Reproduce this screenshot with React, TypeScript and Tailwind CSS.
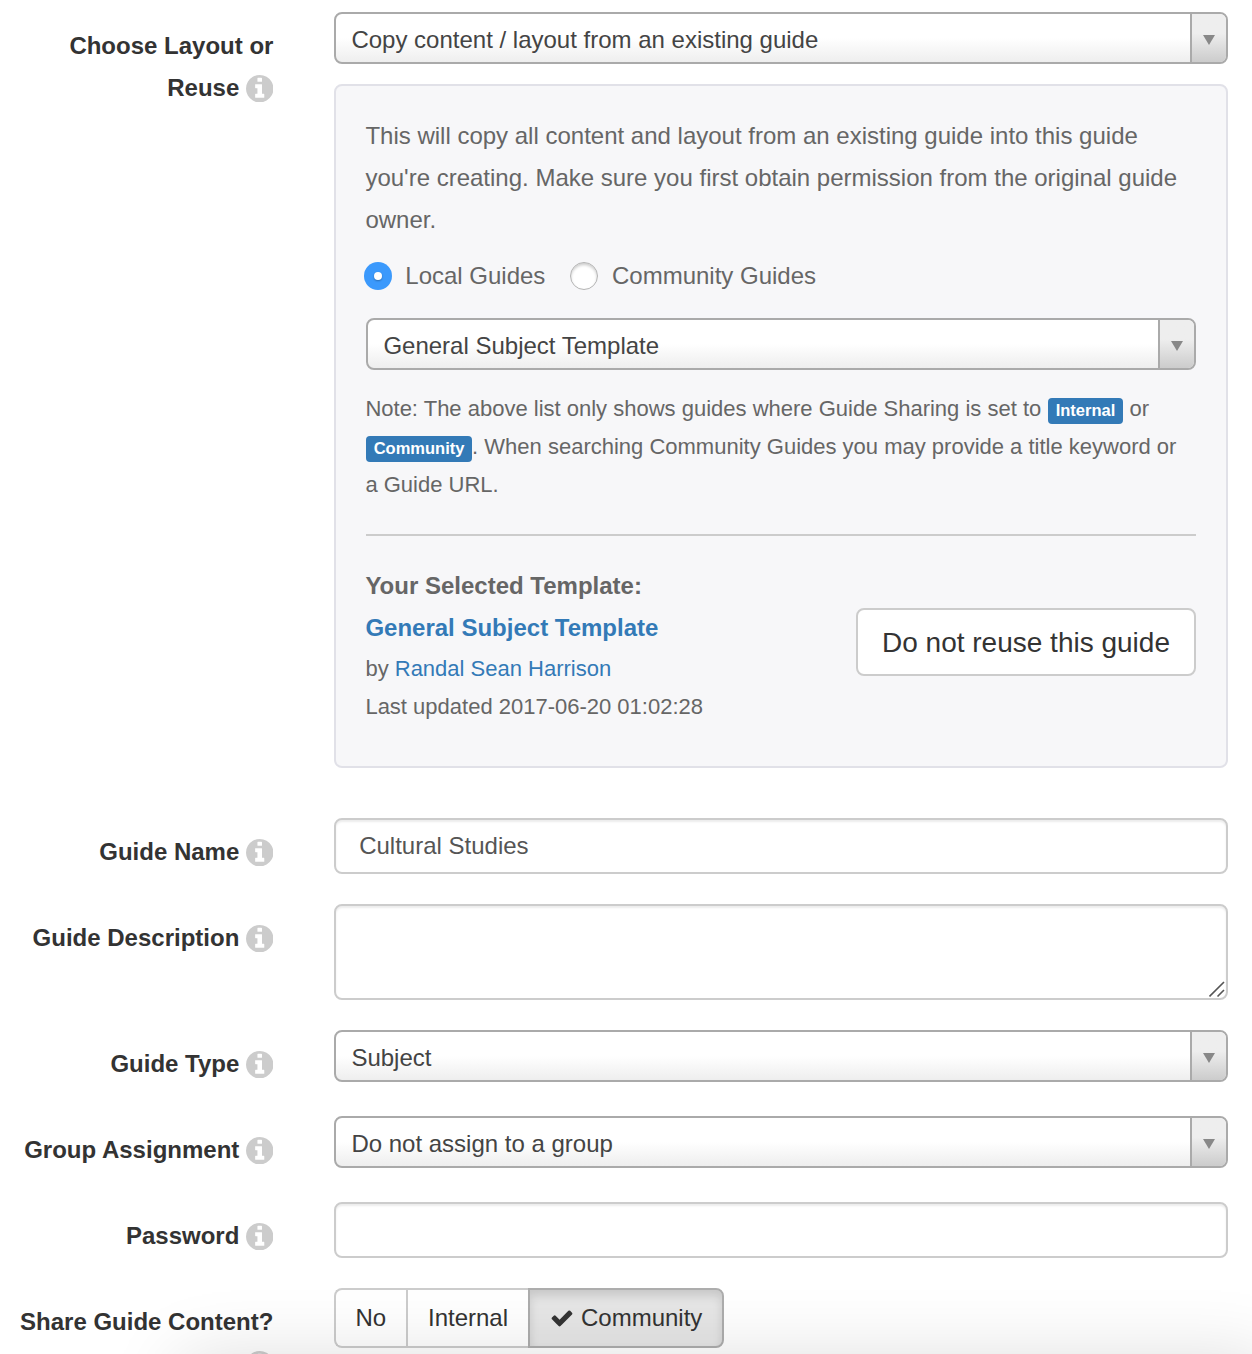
import type { ReactNode } from "react";

function InfoIcon() {
  return (
    <svg viewBox="0 128 1536 1536" className="inline-block h-[27.43px] w-[27.43px] align-[-6.4px]" fill="#cccccc" aria-hidden="true">
      <path d="M1024 1376v-160q0-14-9-23t-23-9h-96v-512q0-14-9-23t-23-9h-320q-14 0-23 9t-9 23v160q0 14 9 23t23 9h96v320h-96q-14 0-23 9t-9 23v160q0 14 9 23t23 9h448q14 0 23-9t9-23zm-128-896v-160q0-14-9-23t-23-9h-192q-14 0-23 9t-9 23v160q0 14 9 23t23 9h192q14 0 23-9t9-23zm640 416q0 209-103 385.5t-279.5 279.5-385.5 103-385.5-103-279.5-279.5-103-385.5 103-385.5 279.5-279.5 385.5-103 385.5 103 279.5 279.5 103 385.5z" />
    </svg>
  );
}

function CheckIcon() {
  return (
    <svg viewBox="0 0 1792 1792" className="h-6 w-6" fill="#333333" aria-hidden="true">
      <path d="M1671 566q0 40-28 68l-724 724-136 136q-28 28-68 28t-68-28l-136-136-362-362q-28-28-28-68t28-68l136-136q28-28 68-28t68 28l294 295 656-657q28-28 68-28t68 28l136 136q28 28 28 68z" />
    </svg>
  );
}

function Row({ label, children }: { label: ReactNode; children: ReactNode }) {
  return (
    <div className="flex items-start">
      <div className="mr-[60.6px] h-0 w-[273.4px] shrink-0 pt-[13px] text-right font-bold whitespace-nowrap text-[#333333]">
        {label}
      </div>
      <div className="w-[894px] shrink-0">{children}</div>
    </div>
  );
}

function Select({ value }: { value: string }) {
  return (
    <div className="flex h-[52px] overflow-hidden rounded-lg border-2 border-[#aaaaaa] bg-linear-to-b from-white from-50% to-[#eeeeee]">
      <div className="flex-1 pt-[5px] pl-[15.4px] text-[#444444]">{value}</div>
      <div className="flex w-9 items-center justify-center border-l-2 border-[#aaaaaa] bg-linear-to-b from-[#eeeeee] from-40% to-[#cccccc]">
        <svg width="12" height="10" viewBox="0 0 12 10" className="mt-1" fill="#888888" aria-hidden="true">
          <path d="M0 0h12L6 10z" />
        </svg>
      </div>
    </div>
  );
}

function Badge({ children }: { children: ReactNode }) {
  return (
    <span className="rounded-[4px] bg-[#337ab7] px-[7.7px] pt-[3px] pb-[5px] text-[16.5px] leading-none font-bold text-white">
      {children}
    </span>
  );
}

function TextBox({ value }: { value?: string }) {
  return (
    <div className="h-14 rounded-lg border-2 border-[#cccccc] bg-white pt-[5px] pl-[23.2px] text-[#555555] shadow-[inset_0_2px_2px_rgba(0,0,0,0.075)]">
      {value}
    </div>
  );
}

export default function App() {
  return (
    <div className="relative h-[1354px] w-[1252px] overflow-hidden bg-white pt-3 font-['Liberation_Sans',Arial,sans-serif] text-[24px] leading-[42px]">
      <Row
        label={
          <>
            Choose Layout or
            <br />
            Reuse <InfoIcon />
          </>
        }
      >
        <Select value="Copy content / layout from an existing guide" />
        <div className="mt-5 h-[684px] rounded-lg border-2 border-[#e1e1e8] bg-[#f7f7f9] px-[30px] pt-[29px] whitespace-nowrap text-[#666666]">
          <p className="-ml-[0.6px]">
            This will copy all content and layout from an existing guide into this guide
            <br />
            you're creating. Make sure you first obtain permission from the original guide
            <br />
            owner.
          </p>
          <div className="mt-[14px] -ml-0.5 flex items-center">
            <span className="flex size-7 items-center justify-center rounded-full bg-[#3b99fc]">
              <span className="size-2 rounded-full bg-white shadow-[0_1px_2px_rgba(0,0,0,0.3)]" />
            </span>
            <span className="w-[178px] pl-[13.3px]">Local Guides</span>
            <span className="size-7 rounded-full border border-[#b4b4b4] bg-white shadow-[inset_0_2px_3px_rgba(0,0,0,0.2)]" />
            <span className="ml-[14px]">Community Guides</span>
          </div>
          <div className="mt-[21px]">
            <Select value="General Subject Template" />
          </div>
          <p className="mt-5 -ml-[0.6px] text-[22px] leading-[38px]">
            Note: The above list only shows guides where Guide Sharing is set to{" "}
            <span className="ml-[0.6px] pr-[0.4px]">
              <Badge>Internal</Badge>
            </span>{" "}
            or
            <br />
            <span className="ml-[0.6px]">
              <Badge>Community</Badge>
            </span>
            . When searching Community Guides you may provide a title keyword or
            <br />a Guide URL.
          </p>
          <div className="mt-[30px] h-0.5 bg-[#cccccc]" />
          <div className="mt-[29px] -ml-[0.6px] flex justify-between">
            <div>
              <div className="font-bold">Your Selected Template:</div>
              <div className="font-bold text-[#337ab7]">General Subject Template</div>
              <div className="pt-px text-[22px] leading-[38px]">
                by <span className="text-[#337ab7]">Randal Sean Harrison</span>
                <br />
                Last updated 2017-06-20 01:02:28
              </div>
            </div>
            <button className="mt-[43px] h-[68px] w-[340px] rounded-lg border-2 border-[#cccccc] bg-white pt-0.5 text-[28px] text-[#333333]">
              Do not reuse this guide
            </button>
          </div>
        </div>
      </Row>

      <div className="mt-[50px] flex flex-col">
        <Row label={<>Guide Name <InfoIcon /></>}>
          <TextBox value="Cultural Studies" />
        </Row>
        <div className="mt-[30px]">
          <Row label={<>Guide Description <InfoIcon /></>}>
            <div className="flex h-24 items-end justify-end rounded-lg border-2 border-[#cccccc] bg-white shadow-[inset_0_2px_2px_rgba(0,0,0,0.075)]">
              <svg width="17" height="17" viewBox="0 0 17 17" stroke="#555555" strokeWidth="1.6" aria-hidden="true">
                <path d="M0.5 15.5L15 1M8.5 15.5L15 9" />
              </svg>
            </div>
          </Row>
        </div>
        <div className="mt-[30px]">
          <Row label={<>Guide Type <InfoIcon /></>}>
            <Select value="Subject" />
          </Row>
        </div>
        <div className="mt-[34px]">
          <Row label={<>Group Assignment <InfoIcon /></>}>
            <Select value="Do not assign to a group" />
          </Row>
        </div>
        <div className="mt-[34px]">
          <Row label={<>Password <InfoIcon /></>}>
            <TextBox />
          </Row>
        </div>
        <div className="mt-[30px]">
          <Row label={<>Share Guide Content?<br /><InfoIcon /></>}>
            <div className="flex h-[60px] text-[#333333]">
              <div className="w-[72px] rounded-l-lg border-2 border-r-0 border-[#cccccc] bg-white pt-[7px] pl-[19.5px]">No</div>
              <div className="w-[122px] border-2 border-r-0 border-[#cccccc] bg-white pt-[7px] pl-5">Internal</div>
              <div className="flex w-[196px] items-start rounded-r-lg border-2 border-[#adadad] bg-[#e6e6e6] pt-[7px] pl-5 shadow-[inset_0_6px_10px_rgba(0,0,0,0.125)]">
                <span className="mt-[9px] mr-[7px]"><CheckIcon /></span>
                Community
              </div>
            </div>
          </Row>
        </div>
      </div>

      {/* Soft shadow rising from the bottom edge of the window */}
      <div className="pointer-events-none absolute -right-5 -bottom-[305px] left-[180px] h-[300px] shadow-[0_0_70px_rgba(0,0,0,0.14)]" />
    </div>
  );
}
